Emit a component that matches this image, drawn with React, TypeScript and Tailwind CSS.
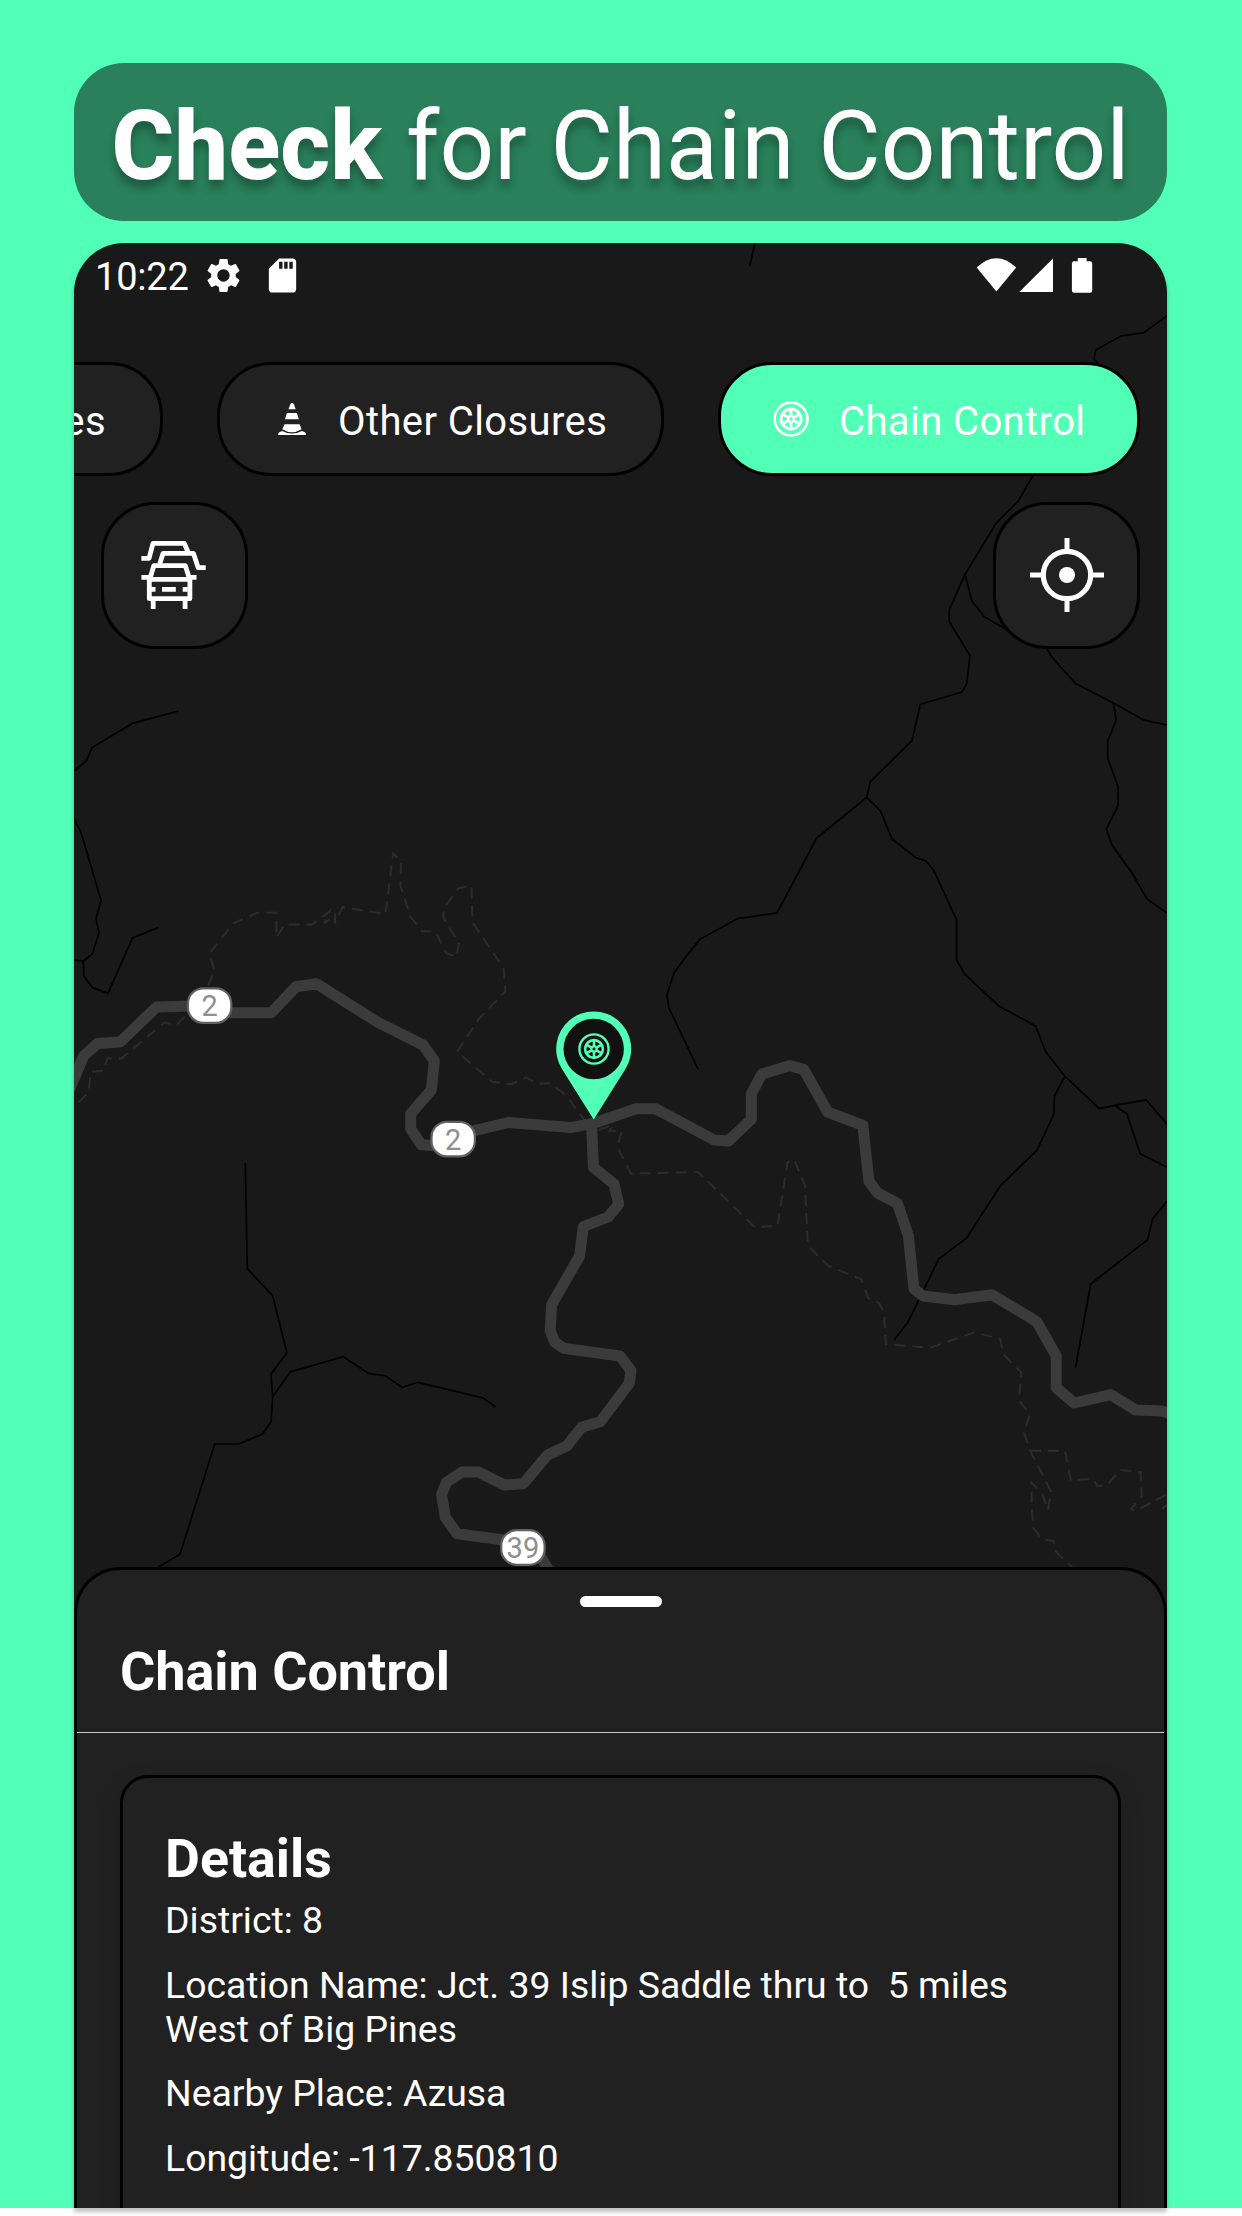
import type { ReactNode } from "react";
import { MdSdCard, MdSettings } from "react-icons/md";

const FONT = "font-['Roboto',sans-serif]";

function WheelIcon({ className }: { className: string }) {
  return (
    <svg viewBox="-18 -18 36 36" className={className} fill="none" stroke="currentColor">
      <circle r="16.4" strokeWidth="2.7" />
      <circle r="10" strokeWidth="2.9" />
      {[30, 90, 150, 210, 270, 330].map((a) => (
        <line key={a} x1="2.6" y1="0" x2="10" y2="0" strokeWidth="2.9" transform={`rotate(${a})`} />
      ))}
      <circle r="2.9" strokeWidth="2.5" />
    </svg>
  );
}

function ConeIcon({ className }: { className: string }) {
  return (
    <svg viewBox="272 401 36 36" className={className} fill="currentColor">
      <path d="M290.4 404q1.7-2 3.4 0l1.9 5.3h-7.2zM286.9 413h10l1.9 6.3H285zM284.6 424.3h15l1.9 5q-9.6 6-19.2 0zM278.1 435v-1.3l1.2-1.4 2.9-1.4q9.8 5.2 19.6 0l3.1 1.4 1.1 1.4v1.3z" />
    </svg>
  );
}

function TrafficIcon() {
  return (
    <svg viewBox="140 540 68 70" className="h-[70px] w-[68px]" fill="none" stroke="white" strokeWidth="4.8" strokeLinejoin="round">
      <path d="M140.4 558.3h7.6l4-15h31.2l4.4 10" />
      <path d="M158.7 564l3.4-10.7h30.3l4.8 14.4h7.5" />
      <path d="M148.8 579.3l4-13.6h31.6l4.2 13.6zM140.4 577.3h8.4M188.6 577.3h6.9" />
      <path d="M148.3 579.3v19.4h40.6v-19.4" />
      <path d="M152.2 599v10M184.1 599v10M150 589.3h4.5M161 589.3h13.8M181.7 589.3h5" />
    </svg>
  );
}

function LocateIcon() {
  return (
    <svg viewBox="-37 -37 74 74" className="size-[74px]" fill="none" stroke="white" strokeWidth="5">
      <circle r="23.7" strokeWidth="5.2" />
      <path d="M0-37v12M0 37V25M-37 0h12M37 0H25" />
      <circle r="8" fill="white" stroke="none" />
    </svg>
  );
}

const MINOR_ROADS = [
  "M754.8 243L749.8 266",
  "M1167 316L1143.7 332.7 1121 336 1095.7 350 1094 359 1100 365",
  "M1033.3 475L1018.3 501 995.7 523.7 965 574.3 949.3 609.7V621.7L970 655.7 966.7 684 962 692 920.3 704.3 912 740.7 870.3 781.7 866.7 797.3 816.7 838 777 913 737.6 918.5 699.5 939.6 683.4 960 673.8 973.3 666.9 995 668.7 1007.3 698.1 1069.3",
  "M866.7 797.3L880.3 810.7 892 839 916 857.7 926 861 934 871 956.6 920V960L965.3 974.7 998.4 1005.7 1035.6 1026 1045.7 1051.7 1064.9 1076.3 1099.4 1108.7 1114.5 1105.3 1146.2 1100 1166.4 1123.3 1170 1132",
  "M1114.5 1105.3L1126.9 1113.7 1140.2 1153.7 1167 1167.3",
  "M1064.9 1076.3L1054.4 1096 1053.9 1114 1036.9 1150.3 1000.7 1185.3 966.7 1238 938.7 1259 918.5 1300.7 907.9 1322.3 894.1 1340",
  "M1167 1201.3L1152.6 1218.7 1147.6 1239.7 1090.7 1284 1075.5 1367.7",
  "M965 574.3L972 601 984.3 616.7 1006 629.3 1047.3 649 1051 656 1075.3 683.3 1113.3 703 1143.7 720 1167 725",
  "M1113.3 703L1116.3 720 1107.7 741V758L1118 786.7V805.7L1106.4 829 1112 845 1132 873 1147 899 1167 913",
  "M178.6 711L132.5 723.4 92.1 747.5 86.8 759.9 73 772",
  "M73 817L80.7 831.5 101.1 900.4 96.1 918.3 98.9 933 92.5 953.7 83.6 961 73 960",
  "M83.6 961V975.8L92.5 987.5 107.9 993.3 132.5 937.9 158.2 927.6",
  "M245.3 1163L247.3 1268.7 272.7 1295.7 286.9 1352.7 271 1374 272.7 1396.7 271 1422 262.4 1434 238.8 1444H214.7L180 1554.3 158.4 1567",
  "M272.7 1396.7L290.2 1372 343.3 1356.7 369 1373.7 385.3 1375.7 402 1387.3 418 1382.3 483.3 1398 495.5 1407",
];

const TRAILS = [
  "M208.2 985.4L214.6 970.6 209.3 953.7 233.2 923.4 257.1 912.8H276.4V937.5L284.6 924.5H311.8L329.6 911.4 324.3 923.4 335 914.8V923.4L342.5 907.2 385.4 914.1 393.2 853.5 401 861.4 400.4 885.5 410.4 916.5 422.1 931.3H435.4L446 953 456.4 957.2 458.9 943.4 443.6 918.3V908.6L458.2 888.3 471.4 885.5 472.5 922.4 503.6 968.2 505.4 991.3 478.2 1019.8 457.1 1051.9 492.1 1081.8 511.1 1084.2 526.1 1077.4 538.6 1084.2 549.3 1082.9 565.4 1094.6 585 1120.7",
  "M598.5 1130L613 1125 609.5 1131H621.9L617.3 1146.7 631 1173.7 698 1172 755 1227.3 777.5 1225.7 787.6 1162.3 794 1159 805 1185.7 807.8 1245.7 828.5 1266 861.1 1279 868.4 1298.3 879.4 1303.3 884 1313.7 885.9 1344.3 930.4 1347.7 974.5 1332.3 1000.2 1339 1003 1354 1021.3 1372.3 1019 1400.7 1030 1414 1024 1432.7 1030 1450.7 1045 1479.3 1051 1491.7 1048 1510 1042 1493 1031.3 1482.3 1032 1511.7 1033.3 1528 1042.3 1539.3 1054 1541.3 1056 1551.7 1073 1568",
  "M1030 1450.7H1065L1070.7 1480 1093.3 1479 1096.7 1485.7H1106.7L1120 1470 1140.7 1472 1141.7 1496.7 1131 1509 1136 1511 1167 1494M1162 1509L1168 1504",
  "M185 1016.4L176.8 1025 164.3 1022.6 121.4 1058.4H107.5L103.6 1070.8 90.7 1071.8 88.6 1092.2 73 1108.3",
];

const HIGHWAYS = [
  "M68 1093L83.6 1056 97.5 1043.6 120.4 1041.9 156.4 1007.1 210 1005.4 230.7 1012.8H271.4L296 986.8 316.4 983.7 377.9 1022.3 423.2 1045 434.3 1060.8 431.4 1089.8 410.7 1113.9V1129L421.4 1144.8 452.9 1147 474.3 1130.7 508.6 1122.5 570.7 1127.6 593.6 1123.2 636.1 1108.7H655.4L714.2 1140 728.4 1141 751.3 1119.3V1094L761.9 1074 789.5 1065.7 803.7 1069.3 827.6 1112 862.9 1125.3 868.9 1181.3 877.6 1193 897.4 1203.3 908.4 1236 913.9 1288.7 923.1 1296 954.7 1299.7 991.9 1294.7 1036.9 1321.7 1056.2 1356V1387.7L1074.1 1403 1110.9 1394.7 1135.6 1410 1161.8 1411 1175 1415",
  "M591.6 1125L593.4 1167.3 614 1184 618.7 1204.3 608.1 1217 583.3 1226.7 579.6 1256 551.6 1304.7 550.2 1330.7 554.8 1342.3 563.6 1348.3 620 1356 631 1370.7 629.2 1383.3 600.3 1421.7 581.5 1427.3 567.2 1445.7 547.3 1455.3 523.3 1483.7 504.1 1485 478.4 1472H462L446.5 1482.3 441.6 1494.3 445.3 1517.3 457.1 1533.7 509 1540.7 535.5 1548.3 550 1572",
];

const SHIELDS = [
  { x: 209.6, y: 1005.6, label: "2" },
  { x: 453.2, y: 1139.1, label: "2" },
  { x: 522.9, y: 1547.5, label: "39" },
];

function MapCanvas() {
  return (
    <svg viewBox="74 243 1093 1340" className={`absolute left-0 top-0 h-[1340px] w-[1093px] ${FONT}`} fill="none">
      <g stroke="#2c2c2c" strokeWidth="2" strokeDasharray="11 7">
        {TRAILS.map((d) => (
          <path key={d} d={d} />
        ))}
      </g>
      <g stroke="#000" strokeWidth="1.7">
        {MINOR_ROADS.map((d) => (
          <path key={d} d={d} />
        ))}
      </g>
      <g stroke="#3b3b3b" strokeWidth="11" strokeLinejoin="round">
        {HIGHWAYS.map((d) => (
          <path key={d} d={d} />
        ))}
      </g>
      {SHIELDS.map((s) => (
        <g key={`${s.x}`}>
          <rect x={s.x - 21.7} y={s.y - 17.3} width="43.4" height="34.6" rx="15.5" fill="#fff" stroke="#616161" strokeWidth="2.2" />
          <text x={s.x} y={s.y + 10.4} fontSize="29" fill="#8f8f8f" textAnchor="middle">
            {s.label}
          </text>
        </g>
      ))}
      <g transform="translate(593.7 1049)">
        <path d="M0 70.5L-31.7 20A37.5 37.5 0 1 1 31.7 20Z" fill="#52ffb7" />
        <circle r="30.2" fill="#111" />
      </g>
    </svg>
  );
}

function Chip({ icon, label, width, active = false }: { icon: ReactNode; label: string; width: string; active?: boolean }) {
  return (
    <div
      className={`flex h-[114px] shrink-0 items-center gap-[30px] rounded-[54px] border-[3px] border-black pl-[52px] text-[40px] tracking-[0.4px] text-white ${width} ${
        active ? "bg-[#52ffb7]" : "bg-[#212121]"
      }`}
    >
      {icon}
      <span className="whitespace-nowrap pt-[5px]">{label}</span>
    </div>
  );
}

function MapButton({ children }: { children: ReactNode }) {
  return (
    <div className="flex size-[147px] items-center justify-center rounded-[54px] border-[3px] border-black bg-[#212121] pb-0.5">
      {children}
    </div>
  );
}

function StatusBar() {
  return (
    <div className="flex h-16 items-center pl-[21px] pr-[74px] text-white">
      <span className="w-[96px] whitespace-nowrap pt-[3px] text-[38px] leading-none tracking-[-0.2px]">10:22</span>
      <MdSettings className="ml-3 size-[41px]" />
      <MdSdCard className="ml-[18px] size-[41px]" />
      <svg viewBox="976 257 117 35" className="ml-auto h-[35px] w-[117px]" fill="white">
        <path d="M996.4 290.6L976.7 266.4Q996.4 248 1016.2 266.4Z" />
        <path d="M1053 257.6V291H1019.3Z" />
        <path d="M1077.8 257h8.8v3.2h3.4q2.2 0 2.2 2.2v27.2q0 2.2-2.2 2.2h-15.9q-2.2 0-2.2-2.2v-27.2q0-2.2 2.2-2.2h3.7z" />
      </svg>
    </div>
  );
}

function Sheet() {
  return (
    <div className="relative h-[641px] overflow-hidden rounded-t-[46px] border-x-[3px] border-t-[3px] border-black bg-[#212121] text-white">
      <div className="mx-auto mt-[26px] h-[10.5px] w-[82px] rounded-full bg-white" />
      <h2 className="ml-[43px] mt-[33px] h-[64px] text-[54px] font-bold leading-[64px] tracking-[-0.05px]">Chain Control</h2>
      <div className="mt-[28px] h-[1.4px] bg-[#c9c9c9]" />
      <div className="ml-[43px] mr-[43px] mt-[42px] h-[600px] rounded-[28px] border-[3px] border-black pl-[42px] pt-[49px] shadow-[0_8px_24px_rgba(0,0,0,0.14)]">
        <h3 className="h-[64px] text-[53.7px] font-bold leading-[64px]">Details</h3>
        <div className="mt-[7px] flex flex-col gap-[20.7px] whitespace-pre text-[37.4px] leading-[44px]">
          <p>District: 8</p>
          <p>{"Location Name: Jct. 39 Islip Saddle thru to  5 miles\nWest of Big Pines"}</p>
          <p>Nearby Place: Azusa</p>
          <p>Longitude: -117.850810</p>
          <p>Latitude: 34.356990</p>
        </div>
      </div>
    </div>
  );
}

export default function App() {
  return (
    <div className={`h-[2216px] w-[1242px] overflow-hidden bg-white ${FONT}`}>
      <div className="flex h-[2208px] flex-col items-start gap-[22px] bg-[#52ffb7] pl-[74px] pt-[63px]">
        <h1 className="flex h-[158px] w-[1093px] shrink-0 items-center justify-center whitespace-pre rounded-[50px] bg-[#29805b] pt-2 text-[96px] leading-none text-white [text-shadow:0_8px_8px_rgba(0,0,0,0.3)]">
          <span className="font-extrabold">Check</span>
          <span> for Chain Control</span>
        </h1>
        <div className="relative flex h-[1965px] w-[1093px] shrink-0 flex-col rounded-t-[50px] bg-[#191919] shadow-[0_4px_4px_rgba(0,0,0,0.25)]">
          <div className="absolute inset-0 overflow-hidden rounded-t-[50px]">
            <MapCanvas />
            <WheelIcon className="absolute left-[503.7px] top-[790px] size-[32px] text-[#52ffb7]" />
          </div>
          <div className="relative flex flex-1 flex-col">
            <StatusBar />
            <div className="mt-[55px] flex justify-end gap-[54px] overflow-hidden pr-[27px]">
              <Chip label="Lane Closures" width="w-max pr-[54px]" icon={<ConeIcon className="size-9" />} />
              <Chip label="Other Closures" width="w-[447px]" icon={<ConeIcon className="size-9" />} />
              <Chip label="Chain Control" width="w-[422px]" icon={<WheelIcon className="size-9" />} active />
            </div>
            <div className="mt-[26px] flex justify-between px-[27px]">
              <MapButton>
                <TrafficIcon />
              </MapButton>
              <MapButton>
                <LocateIcon />
              </MapButton>
            </div>
          </div>
          <Sheet />
        </div>
      </div>
    </div>
  );
}
